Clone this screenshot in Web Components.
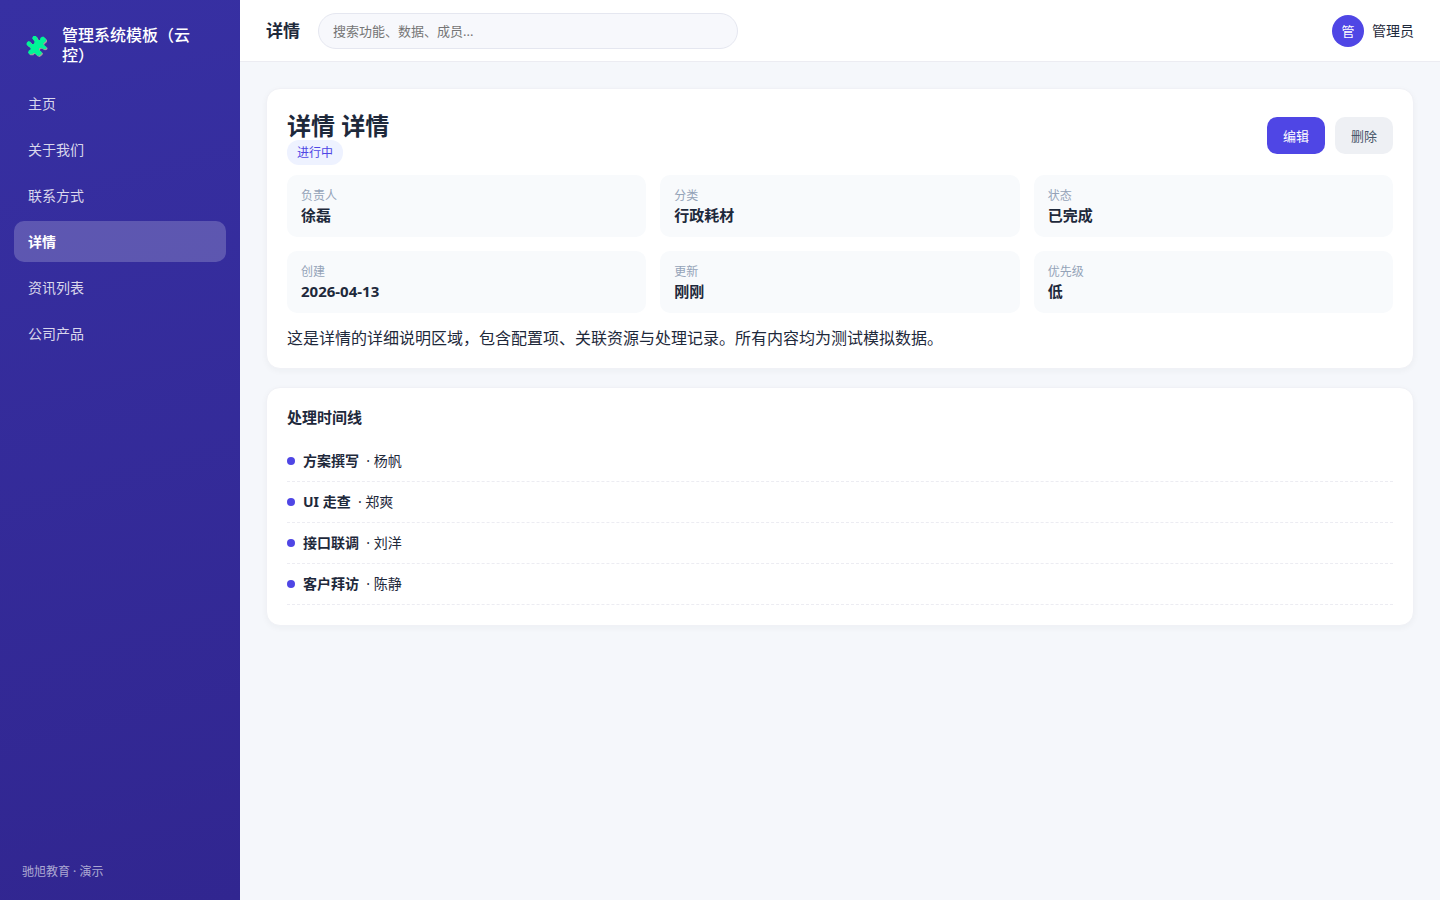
<!DOCTYPE html>
<html lang="zh-CN">
<head>
<meta charset="utf-8">
<title>详情</title>
<style>
html, body { margin: 0; }
body {
  font-family: "Noto Sans", "Noto Sans CJK SC", sans-serif;
  font-size: 14px;
  color: #1e293b;
  background: #f5f7fb;
  --primary: #4f46e5;
  --line: #ececf2;
}
</style>
</head>
<body>
<admin-shell></admin-shell>
<script>
const define = (name, html) => {
  const template = document.createElement("template");
  template.innerHTML = html;
  customElements.define(name, class extends HTMLElement {
    constructor() {
      super();
      this.attachShadow({ mode: "open" }).append(template.content.cloneNode(true));
    }
  });
};

define("brand-mark", `
<style>
:host { display: flex; align-items: center; gap: 12px; padding: 0 22px 0 10px; color: #fff; font-size: 16px; line-height: 20px; font-weight: 500; }
svg { flex: none; width: 26px; height: 26px; }
</style>
<svg viewBox="0 0 78 78" aria-hidden="true">
  <path fill="#a39a9f" transform="translate(3 3)" d="M24 19L28 12L36 12L41 20L41 24L48 24L49 18L54 14L60 14L62 19L66 20L66 27L60 32L57 36L63 42L68 45L66 50L60 52L56 50L52 47L46 48L45 53L49 57L54 61L52 66L44 72L38 70L33 64L28 63L25 67L16 67L12 62L14 56L20 52L19 46L12 42L7 37L9 31L14 27L20 30L22 36L29 36L32 29L28 23Z"/>
  <path fill="#00f596" d="M24 19L28 12L36 12L41 20L41 24L48 24L49 18L54 14L60 14L62 19L66 20L66 27L60 32L57 36L63 42L68 45L66 50L60 52L56 50L52 47L46 48L45 53L49 57L54 61L52 66L44 72L38 70L33 64L28 63L25 67L16 67L12 62L14 56L20 52L19 46L12 42L7 37L9 31L14 27L20 30L22 36L29 36L32 29L28 23Z"/>
</svg>
<span><slot></slot></span>`);

define("nav-item", `
<style>
:host { display: block; }
a { display: block; padding: 10px 14px; border-radius: 10px; line-height: 21px; color: rgba(255,255,255,.82); text-decoration: none; }
:host([active]) a { background: rgba(255,255,255,.2); color: #fff; font-weight: 700; }
</style>
<a href="#"><slot></slot></a>`);

define("side-bar", `
<style>
:host { display: flex; flex-direction: column; box-sizing: border-box; padding: 25px 14px 18px; background: linear-gradient(165deg, #3730a3, #312690); }
nav { display: flex; flex-direction: column; gap: 5px; margin-top: 18px; }
footer { margin-top: auto; padding: 0 8px; font-size: 12px; line-height: 20px; color: rgba(255,255,255,.6); }
</style>
<brand-mark>管理系统模板（云控）</brand-mark>
<nav>
  <nav-item>主页</nav-item>
  <nav-item>关于我们</nav-item>
  <nav-item>联系方式</nav-item>
  <nav-item active>详情</nav-item>
  <nav-item>资讯列表</nav-item>
  <nav-item>公司产品</nav-item>
</nav>
<footer>驰旭教育 · 演示</footer>`);

define("top-bar", `
<style>
:host { display: flex; align-items: center; gap: 18px; padding: 13px 26px 12px; background: #fff; border-bottom: 1px solid var(--line); }
strong { font-size: 17px; line-height: 24px; }
input { flex: 0 1 420px; min-width: 0; height: 36px; box-sizing: border-box; padding: 0 14px; border: 1px solid #e5e7f0; border-radius: 18px; background: #f7f8fc; font: inherit; font-size: 13px; color: inherit; }
input::placeholder { color: #757575; }
.user { display: flex; align-items: center; gap: 8px; margin-left: auto; line-height: 20px; white-space: nowrap; }
.avatar { width: 32px; border-radius: 50%; line-height: 32px; text-align: center; font-size: 13px; color: #fff; background: var(--primary); }
</style>
<strong>详情</strong>
<input type="search" aria-label="搜索" placeholder="搜索功能、数据、成员...">
<div class="user"><span class="avatar">管</span><span>管理员</span></div>`);

define("ui-card", `
<style>
:host { display: block; padding: 20px; border: 1px solid #f0f1f6; border-radius: 14px; background: #fff; box-shadow: 0 2px 6px rgba(30,41,59,.04); }
</style>
<slot></slot>`);

define("ui-button", `
<style>
:host { display: block; }
button { display: block; height: 37px; padding: 0 16px; border: 0; border-radius: 10px; font: inherit; font-size: 13px; color: #475569; background: #eef0f4; }
:host([primary]) button { color: #fff; background: var(--primary); }
</style>
<button type="button"><slot></slot></button>`);

define("meta-field", `
<style>
:host { display: block; padding: 12px 14px; border-radius: 10px; background: #f8fafc; }
.label { font-size: 12px; line-height: 18px; color: #94a3b8; }
.value { font-size: 15px; line-height: 20px; font-weight: 700; }
</style>
<div class="label"><slot name="label"></slot></div>
<div class="value"><slot></slot></div>`);

define("detail-summary", `
<style>
:host { display: block; }
header { display: flex; align-items: center; justify-content: space-between; }
h1 { margin: 0; font-size: 24px; line-height: 34px; }
.status { line-height: 19px; font-size: 12px; }
.pill { padding: 4px 10px; border-radius: 12px; color: var(--primary); background: #eef2ff; }
.actions { display: flex; gap: 10px; }
.grid { display: grid; grid-template-columns: repeat(3, 1fr); gap: 14px; margin-top: 13px; }
p { margin: 15px 0 0; font-size: 16px; line-height: 20px; }
</style>
<ui-card>
  <header>
    <div>
      <h1>详情 详情</h1>
      <div class="status"><span class="pill">进行中</span></div>
    </div>
    <div class="actions"><ui-button primary>编辑</ui-button><ui-button>删除</ui-button></div>
  </header>
  <div class="grid">
    <meta-field><span slot="label">负责人</span>徐磊</meta-field>
    <meta-field><span slot="label">分类</span>行政耗材</meta-field>
    <meta-field><span slot="label">状态</span>已完成</meta-field>
    <meta-field><span slot="label">创建</span>2026-04-13</meta-field>
    <meta-field><span slot="label">更新</span>刚刚</meta-field>
    <meta-field><span slot="label">优先级</span>低</meta-field>
  </div>
  <p>这是详情的详细说明区域，包含配置项、关联资源与处理记录。所有内容均为测试模拟数据。</p>
</ui-card>`);

define("timeline-item", `
<style>
:host { display: flex; align-items: center; gap: 8px; padding: 10px 0; border-bottom: 1px dashed var(--line); line-height: 20px; }
i { width: 8px; height: 8px; border-radius: 50%; background: var(--primary); }
</style>
<i></i><div><b><slot name="step"></slot></b>&nbsp; ·&nbsp;<slot></slot></div>`);

define("detail-timeline", `
<style>
:host { display: block; }
h2 { margin: 0 0 15px; font-size: 15px; line-height: 18px; }
</style>
<ui-card>
  <h2>处理时间线</h2>
  <timeline-item><span slot="step">方案撰写</span>杨帆</timeline-item>
  <timeline-item><span slot="step">UI 走查</span>郑爽</timeline-item>
  <timeline-item><span slot="step">接口联调</span>刘洋</timeline-item>
  <timeline-item><span slot="step">客户拜访</span>陈静</timeline-item>
</ui-card>`);

define("admin-shell", `
<style>
:host { display: grid; grid-template-columns: 240px minmax(0, 1fr); min-height: 100vh; }
main { display: flex; flex-direction: column; gap: 18px; padding: 26px; }
</style>
<side-bar></side-bar>
<div>
  <top-bar></top-bar>
  <main>
    <detail-summary></detail-summary>
    <detail-timeline></detail-timeline>
  </main>
</div>`);
</script>
</body>
</html>
